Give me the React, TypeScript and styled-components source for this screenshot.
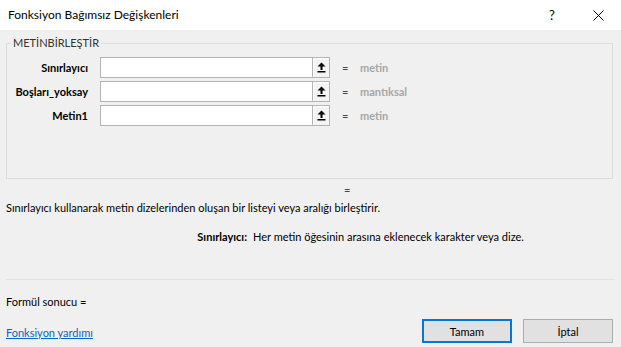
import React from "react";
import styled, { createGlobalStyle } from "styled-components";

const Global = createGlobalStyle`
  html, body { margin: 0; padding: 0; background: #f0f0f0; }
  body { font-family: Lato, "Noto Sans", sans-serif; font-size: 11px; color: #000; }
  * { box-sizing: border-box; }
`;

const Window = styled.div`
  width: 621px;
  height: 347px;
  background: #f0f0f0;
  display: flex;
  flex-direction: column;
  overflow: hidden;
`;

const TitleBar = styled.div`
  height: 30px;
  background: #ffffff;
  display: flex;
  align-items: center;
  padding-left: 8px;
`;

const Title = styled.div`
  flex: 1;
  font-size: 12px;
  line-height: 16px;
  color: #000;
`;

const TitleButton = styled.div`
  width: 46px;
  height: 30px;
  display: flex;
  align-items: center;
  justify-content: center;
  font-size: 13px;
  color: #000;
`;

const Body = styled.div`
  display: flex;
  flex-direction: column;
  padding: 0 8px 0 6px;
`;

const Group = styled.fieldset`
  margin: 6px 0 0 0;
  padding: 7px 0 0 0;
  border: 1px solid #dcdcdc;
  height: 143px;
  min-width: 0;
`;

const Legend = styled.legend`
  margin-left: 4px;
  padding: 0 2px;
  font-size: 11px;
  line-height: 14px;
  color: #333;
`;

const ArgGrid = styled.div`
  display: grid;
  grid-template-columns: 93px 212px 18px 30px 1fr;
  row-gap: 3px;
  align-items: center;
`;

const ArgLabel = styled.div`
  text-align: right;
  padding-right: 12px;
  font-weight: 700;
  font-size: 11px;
  line-height: 21px;
  white-space: nowrap;
`;

const ArgInput = styled.div`
  height: 21px;
  background: #fff;
  border: 1px solid #b4b4b4;
  border-right: none;
`;

const PickButton = styled.div`
  height: 21px;
  border: 1px solid #b4b4b4;
  background: #f4f4f4;
  box-shadow: inset 1px 1px 0 #fff;
  display: flex;
  align-items: center;
  justify-content: center;
`;

const Eq = styled.div`
  padding-left: 12px;
  color: #444;
  font-size: 11px;
`;

const ArgValue = styled.div`
  color: #a6a6a6;
  font-weight: 700;
  font-size: 11px;
`;

const EqLine = styled.div`
  margin-top: 3px;
  padding-left: 338px;
  line-height: 16px;
  font-size: 11px;
  color: #444;
`;

const Description = styled.div`
  margin-top: 2px;
  line-height: 16px;
  font-size: 11px;
`;

const ArgHelp = styled.div`
  margin-top: 13px;
  display: grid;
  grid-template-columns: 241px 1fr;
  column-gap: 6px;
  line-height: 16px;
  font-size: 11px;
`;

const ArgHelpName = styled.div`
  text-align: right;
  font-weight: 700;
`;

const Separator = styled.div`
  margin-top: 34px;
  height: 1px;
  background: #e3e3e3;
  margin-right: -2px;
`;

const Result = styled.div`
  margin-top: 14px;
  line-height: 16px;
  font-size: 11px;
`;

const Footer = styled.div`
  margin-top: 9px;
  display: flex;
  align-items: center;
  gap: 11px;
`;

const HelpLink = styled.a`
  flex: 1;
  color: #0066cc;
  text-decoration: underline;
  font-size: 11px;
  line-height: 16px;
  padding-top: 3px;
`;

const DialogButton = styled.button<{ $primary?: boolean }>`
  width: 90px;
  height: 24px;
  margin: 0;
  padding: 0;
  background: #e1e1e1;
  border: ${(p) => (p.$primary ? "2px solid #0078d7" : "1px solid #adadad")};
  font-family: inherit;
  font-size: 11px;
  color: #000;
`;

const UploadIcon = () => (
  <svg width="9" height="11" viewBox="0 0 9 11">
    <path d="M4.5 0.5 L8.5 4.5 L5.5 4.5 L5.5 8 L3.5 8 L3.5 4.5 L0.5 4.5 Z" fill="#000" />
    <rect x="0.5" y="9" width="8" height="1.5" fill="#000" />
  </svg>
);

const CloseIcon = () => (
  <svg width="11" height="11" viewBox="0 0 11 11">
    <path d="M0.5 0.5 L10.5 10.5 M10.5 0.5 L0.5 10.5" stroke="#000" strokeWidth="1" />
  </svg>
);

const args = [
  { name: "Sınırlayıcı", value: "metin" },
  { name: "Boşları_yoksay", value: "mantıksal" },
  { name: "Metin1", value: "metin" },
];

export default function App() {
  return (
    <>
      <Global />
      <Window>
        <TitleBar>
          <Title>Fonksiyon Bağımsız Değişkenleri</Title>
          <TitleButton>?</TitleButton>
          <TitleButton>
            <CloseIcon />
          </TitleButton>
        </TitleBar>
        <Body>
          <Group>
            <Legend>METİNBİRLEŞTİR</Legend>
            <ArgGrid>
              {args.map((a) => (
                <React.Fragment key={a.name}>
                  <ArgLabel>{a.name}</ArgLabel>
                  <ArgInput />
                  <PickButton>
                    <UploadIcon />
                  </PickButton>
                  <Eq>=</Eq>
                  <ArgValue>{a.value}</ArgValue>
                </React.Fragment>
              ))}
            </ArgGrid>
          </Group>
          <EqLine>=</EqLine>
          <Description>
            Sınırlayıcı kullanarak metin dizelerinden oluşan bir listeyi veya aralığı birleştirir.
          </Description>
          <ArgHelp>
            <ArgHelpName>Sınırlayıcı:</ArgHelpName>
            <span>Her metin öğesinin arasına eklenecek karakter veya dize.</span>
          </ArgHelp>
          <Separator />
          <Result>Formül sonucu =</Result>
          <Footer>
            <HelpLink href="#">Fonksiyon yardımı</HelpLink>
            <DialogButton $primary>Tamam</DialogButton>
            <DialogButton>İptal</DialogButton>
          </Footer>
        </Body>
      </Window>
    </>
  );
}
